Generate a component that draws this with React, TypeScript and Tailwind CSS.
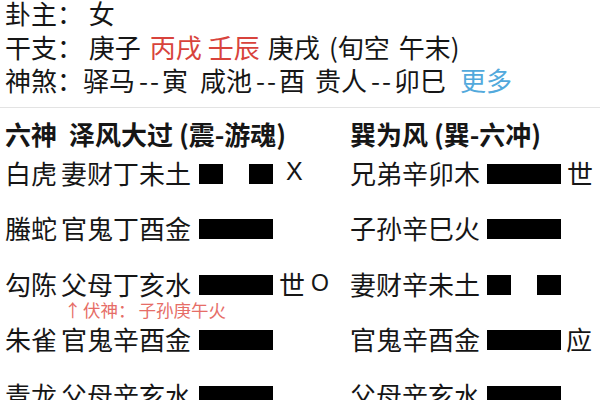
import React from "react";

function Bar({ yin }: { yin?: boolean }) {
  if (yin) {
    return (
      <div className="mt-[3px] flex h-[20px] w-[74px] shrink-0 justify-between">
        <div className="w-[24px] bg-black" />
        <div className="w-[24px] bg-black" />
      </div>
    );
  }
  return <div className="mt-[3px] h-[20px] w-[74px] shrink-0 bg-black" />;
}

type L = { god: string; name: string; yin?: boolean; marks?: React.ReactNode; note?: boolean };
type R = { name: string; yin?: boolean; marks?: React.ReactNode };

const left: L[] = [
  { god: "白虎", name: "妻财丁未土", yin: true, marks: <span className="ml-[13px] font-['Liberation_Sans',sans-serif] text-[25px]">X</span> },
  { god: "螣蛇", name: "官鬼丁酉金" },
  {
    god: "勾陈",
    name: "父母丁亥水",
    marks: (
      <>
        <span className="ml-[6px]">世</span>
        <span className="ml-[6px] font-['Liberation_Sans',sans-serif] text-[23px]">O</span>
      </>
    ),
    note: true,
  },
  { god: "朱雀", name: "官鬼辛酉金" },
  { god: "青龙", name: "父母辛亥水" },
];

const right: R[] = [
  { name: "兄弟辛卯木", marks: <span className="ml-[6px]">世</span> },
  { name: "子孙辛巳火" },
  { name: "妻财辛未土", yin: true },
  { name: "官鬼辛酉金", marks: <span className="ml-[5px]">应</span> },
  { name: "父母辛亥水" },
];

function Dash() {
  return <span className="inline-block w-[27px] pl-[4px] tracking-[2px]">--</span>;
}

export default function App() {
  return (
    <div className="h-[400px] w-[600px] overflow-hidden bg-white font-['Noto_Sans_CJK_SC',sans-serif] text-[26px] text-[#161616]">
      <div className="-mt-[4px] pl-[5px] leading-[33.5px] whitespace-nowrap">
        <div>卦主： 女</div>
        <div>
          干支： 庚子
          <span className="ml-[9px] text-[#d8433c]">丙戌</span>
          <span className="ml-[6px] text-[#d8433c]">壬辰</span>
          <span className="ml-[8px]">庚戌</span>
          <span className="ml-[9px]">(旬空</span>
          <span className="ml-[9px]">午末)</span>
        </div>
        <div>
          神煞：驿马<Dash />寅
          <span className="ml-[12px]">咸池</span>
          <Dash />酉
          <span className="ml-[10px]">贵人</span>
          <Dash />卯巳
          <span className="ml-[14px] text-[#52a9dc]">更多</span>
        </div>
      </div>
      <div className="mt-[10.5px] h-px bg-[#e3e3e3]" />
      <div className="mt-[14.75px] flex h-[21.5px] items-center whitespace-nowrap font-bold leading-[21.5px]">
        <div className="flex w-[350px] pl-[5px]">
          <span className="w-[64px]">六神</span>
          <span>泽风大过 (震-游魂)</span>
        </div>
        <div>巽为风 (巽-六冲)</div>
      </div>
      <div className="flex whitespace-nowrap">
        <div className="w-[350px] pl-[5px]">
          {left.map((r, i) => (
            <div key={i} className="relative flex h-[55.5px] items-center">
              <span className="w-[56px] shrink-0">{r.god}</span>
              <span className="w-[138px] shrink-0">{r.name}</span>
              <Bar yin={r.yin} />
              {r.marks}
              {r.note && (
                <div className="absolute left-[58px] top-[45px] flex text-[17.5px] leading-[20px] text-[#e66d67]">
                  <span className="w-[20px] shrink-0 pl-[1px]">↑</span>
                  <span>伏神：</span>
                  <span className="ml-[3px]">子孙庚午火</span>
                </div>
              )}
            </div>
          ))}
        </div>
        <div className="flex-1">
          {right.map((r, i) => (
            <div key={i} className="flex h-[55.5px] items-center">
              <span className="w-[137px] shrink-0">{r.name}</span>
              <Bar yin={r.yin} />
              {r.marks}
            </div>
          ))}
        </div>
      </div>
    </div>
  );
}
